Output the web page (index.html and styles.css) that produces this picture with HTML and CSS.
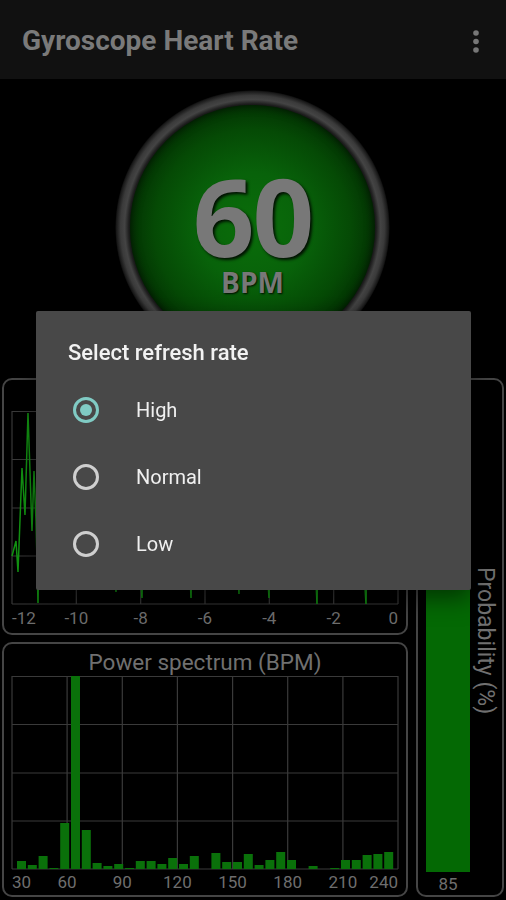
FILE: index.html
```html
<!DOCTYPE html>
<html lang="en">
<head>
<meta charset="utf-8">
<title>Gyroscope Heart Rate</title>
<link rel="stylesheet" href="styles.css">
</head>
<body>
<header class="toolbar">
  <h1 class="toolbar-title">Gyroscope Heart Rate</h1>
  <span class="menu-btn" aria-label="More options">
    <svg width="24" height="24" viewBox="0 0 24 24"><circle cx="12" cy="4" r="2.8" fill="#777"/><circle cx="12" cy="12.5" r="2.8" fill="#777"/><circle cx="12" cy="21" r="2.8" fill="#777"/></svg>
  </span>
</header>

<section class="gauge">
  <div class="dial">
    <div class="face">
      <span class="bpm-value">60</span>
      <span class="bpm-unit">BPM</span>
    </div>
  </div>
</section>

<main class="charts">
  <div class="card gyro">
    <svg class="plot" width="402" height="220" viewBox="0 0 402 220">
      <g stroke="#3a3a3a" stroke-width="1.2" fill="none">
        <line x1="8" y1="0.5" x2="394" y2="0.5"/>
        <line x1="8" y1="48.5" x2="394" y2="48.5"/>
        <line x1="8" y1="97" x2="394" y2="97"/>
        <line x1="8" y1="145" x2="394" y2="145"/>
        <line x1="8" y1="193" x2="394" y2="193"/>
        <line x1="8" y1="0" x2="8" y2="193"/>
        <line x1="72.3" y1="0" x2="72.3" y2="193"/>
        <line x1="136.7" y1="0" x2="136.7" y2="193"/>
        <line x1="201" y1="0" x2="201" y2="193"/>
        <line x1="265.3" y1="0" x2="265.3" y2="193"/>
        <line x1="329.7" y1="0" x2="329.7" y2="193"/>
        <line x1="394" y1="0" x2="394" y2="193"/>
      </g>
      <polyline fill="none" stroke="#129412" stroke-width="1.5" points="8,145 12,130 14,161 18,57 21,104 24,2 28,120 30,60 32,110 34,192 36,90 40,60 44,120 48,80 52,130 56,70 60,110 64,95 68,140 72,85 76,120 80,100 84,150 88,70 92,115 96,105 100,140 104,90 108,125 112,181 114,110 118,80 122,130 126,95 130,115 134,140 138,187 140,100 144,75 148,120 152,105 156,135 160,85 164,110 168,130 172,95 176,145 180,90 184,120 187,187 189,115 193,80 197,125 201,100 205,140 209,90 213,115 217,130 221,85 225,120 229,105 233,150 235,183 237,95 241,75 245,120 249,110 253,135 257,90 261,125 265,187 267,100 271,80 275,130 279,95 283,115 287,140 291,85 295,120 299,105 303,135 307,90 311,150 313,193 315,95 319,80 323,125 327,100 331,140 335,85 339,115 343,130 347,95 351,120 355,105 359,145 362,193 364,100 368,75 372,120 376,110 380,135 384,90 388,120 392,105 394,110"/>
      <g class="axis-label">
        <text x="8" y="213" text-anchor="start">-12</text>
        <text x="72.3" y="213" text-anchor="middle">-10</text>
        <text x="136.7" y="213" text-anchor="middle">-8</text>
        <text x="201" y="213" text-anchor="middle">-6</text>
        <text x="265.3" y="213" text-anchor="middle">-4</text>
        <text x="329.7" y="213" text-anchor="middle">-2</text>
        <text x="394" y="213" text-anchor="end">0</text>
      </g>
    </svg>
  </div>

  <div class="card power">
    <div class="card-title">Power spectrum (BPM)</div>
    <svg class="plot" width="402" height="217" viewBox="0 0 402 217">
      <g stroke="#3a3a3a" stroke-width="1.2" fill="none">
        <line x1="8" y1="0.5" x2="394" y2="0.5"/>
        <line x1="8" y1="48.5" x2="394" y2="48.5"/>
        <line x1="8" y1="97" x2="394" y2="97"/>
        <line x1="8" y1="145" x2="394" y2="145"/>
        <line x1="8" y1="193" x2="394" y2="193"/>
        <line x1="8" y1="0" x2="8" y2="193"/>
        <line x1="63.1" y1="0" x2="63.1" y2="193"/>
        <line x1="118.3" y1="0" x2="118.3" y2="193"/>
        <line x1="173.4" y1="0" x2="173.4" y2="193"/>
        <line x1="228.6" y1="0" x2="228.6" y2="193"/>
        <line x1="283.7" y1="0" x2="283.7" y2="193"/>
        <line x1="338.9" y1="0" x2="338.9" y2="193"/>
        <line x1="394" y1="0" x2="394" y2="193"/>
      </g>
      <g fill="#0a710a">
        <rect x="13" y="185" width="9" height="8"/>
        <rect x="23.8" y="189" width="9" height="4"/>
        <rect x="34.6" y="180" width="9" height="13"/>
        <rect x="45.4" y="192" width="9" height="1"/>
        <rect x="56.2" y="147" width="9" height="46"/>
        <rect x="67" y="0" width="9" height="193"/>
        <rect x="77.8" y="154" width="9" height="39"/>
        <rect x="88.6" y="187" width="9" height="6"/>
        <rect x="99.4" y="190" width="9" height="3"/>
        <rect x="110.2" y="188" width="9" height="5"/>
        <rect x="121" y="192" width="9" height="1"/>
        <rect x="131.8" y="185" width="9" height="8"/>
        <rect x="142.6" y="185" width="9" height="8"/>
        <rect x="153.4" y="188" width="9" height="5"/>
        <rect x="164.2" y="182" width="9" height="11"/>
        <rect x="175" y="188" width="9" height="5"/>
        <rect x="185.8" y="180" width="9" height="13"/>
        <rect x="207.4" y="177" width="9" height="16"/>
        <rect x="218.2" y="186" width="9" height="7"/>
        <rect x="229" y="186" width="9" height="7"/>
        <rect x="239.8" y="178" width="9" height="15"/>
        <rect x="250.6" y="189" width="9" height="4"/>
        <rect x="261.4" y="184" width="9" height="9"/>
        <rect x="272.2" y="176" width="9" height="17"/>
        <rect x="283" y="184" width="9" height="9"/>
        <rect x="304.6" y="190" width="9" height="3"/>
        <rect x="326.2" y="192" width="9" height="1"/>
        <rect x="337" y="184" width="9" height="9"/>
        <rect x="347.8" y="184" width="9" height="9"/>
        <rect x="358.6" y="179" width="9" height="14"/>
        <rect x="369.4" y="178" width="9" height="15"/>
        <rect x="380.2" y="176" width="9" height="17"/>
      </g>
      <g class="axis-label">
        <text x="8" y="212" text-anchor="start">30</text>
        <text x="63.1" y="212" text-anchor="middle">60</text>
        <text x="118.3" y="212" text-anchor="middle">90</text>
        <text x="173.4" y="212" text-anchor="middle">120</text>
        <text x="228.6" y="212" text-anchor="middle">150</text>
        <text x="283.7" y="212" text-anchor="middle">180</text>
        <text x="338.9" y="212" text-anchor="middle">210</text>
        <text x="394" y="212" text-anchor="end">240</text>
      </g>
    </svg>
  </div>

  <div class="card prob">
    <div class="prob-col">
      <div class="prob-track">
        <div class="prob-bar" style="height: 85%"></div>
      </div>
      <div class="prob-value">85</div>
    </div>
    <div class="prob-label">Probability (%)</div>
  </div>
</main>

<div class="scrim">
  <div class="dialog" role="dialog">
    <div class="dialog-title">Select refresh rate</div>
    <ul class="options">
      <li class="option"><span class="radio checked"></span><span class="option-label">High</span></li>
      <li class="option"><span class="radio"></span><span class="option-label">Normal</span></li>
      <li class="option"><span class="radio"></span><span class="option-label">Low</span></li>
    </ul>
  </div>
</div>
</body>
</html>
```
FILE: styles.css
```css
* { box-sizing: border-box; }

html, body {
  margin: 0;
  padding: 0;
}

body {
  width: 506px;
  height: 900px;
  overflow: hidden;
  background: #000;
  font-family: Roboto, "Noto Sans", "Liberation Sans", sans-serif;
  color: #777;
}

/* Toolbar */
.toolbar {
  height: 79px;
  background: #111;
  display: flex;
  align-items: center;
  justify-content: space-between;
  padding: 0 18px 0 22px;
}

.toolbar-title {
  margin: 0;
  font-size: 28px;
  font-weight: 700;
  line-height: 79px;
  color: #7a7a7a;
  padding-top: 2px;
}

.menu-btn {
  display: flex;
  width: 24px;
  height: 24px;
  margin-top: 3px;
}

/* Gauge */
.gauge {
  height: 299px;
  display: flex;
  justify-content: center;
  padding-top: 11px;
}

.dial {
  width: 275px;
  height: 275px;
  border-radius: 50%;
  padding: 15px;
  background: radial-gradient(circle closest-side, #111 0 88.5%, #1e1e1e 90%, #444 93%, #3a3a3a 96%, #181818 99%, #000 100%);
  box-shadow: 0 0 4px rgba(0,0,0,0.8);
  margin-left: -1px;
}

.face {
  width: 245px;
  height: 245px;
  border-radius: 50%;
  background: radial-gradient(circle closest-side, #0a6e0a 0%, #08620a 45%, #054a05 80%, #033303 100%);
  box-shadow: inset 0 0 10px rgba(0,0,0,0.7);
  display: flex;
  flex-direction: column;
  align-items: center;
  padding-top: 61px;
}

.bpm-value {
  font-family: "Open Sans", "Noto Sans", sans-serif;
  font-weight: 700;
  font-size: 108px;
  line-height: 100px;
  color: #787878;
  text-shadow: 2px 2px 3px rgba(0,0,0,0.85);
  letter-spacing: -2px;
}

.bpm-unit {
  font-family: "Open Sans", "Noto Sans", sans-serif;
  font-weight: 700;
  font-size: 28px;
  line-height: 28px;
  margin-top: 2px;
  color: #787878;
  text-shadow: 1px 1px 2px rgba(0,0,0,0.85);
}

/* Charts */
.charts {
  display: grid;
  grid-template-columns: 406px 88px;
  grid-template-rows: 257px 255px;
  column-gap: 8px;
  row-gap: 7px;
  padding: 0 2px;
}

.card {
  border: 2px solid #454545;
  border-radius: 10px;
  background: #000;
}

.plot {
  display: block;
}

.axis-label text {
  font-family: Roboto, "Noto Sans", sans-serif;
  font-size: 17px;
  fill: #6e6e6e;
}

.gyro {
  padding-top: 31px;
}

.power {
  display: flex;
  flex-direction: column;
}

.card-title {
  height: 32px;
  padding-top: 3px;
  text-align: center;
  font-size: 22.5px;
  line-height: 30px;
  color: #707070;
}

.prob {
  grid-column: 2;
  grid-row: 1 / span 2;
  display: flex;
}

.prob-col {
  width: 52px;
  padding-left: 8px;
  display: flex;
  flex-direction: column;
}

.prob-track {
  flex: 1;
  display: flex;
  align-items: flex-end;
  padding-top: 33px;
}

.prob-bar {
  width: 44px;
  background: #046904;
}

.prob-value {
  height: 23px;
  text-align: center;
  font-size: 17px;
  line-height: 23px;
  padding-top: 1px;
  color: #6e6e6e;
}

.prob-label {
  flex: 1;
  display: flex;
  align-items: center;
  justify-content: center;
  writing-mode: vertical-rl;
  font-size: 23px;
  color: #707070;
  padding-right: 1px;
  padding-top: 7px;
}

/* Dialog */
.scrim {
  position: fixed;
  inset: 0;
  display: flex;
  align-items: center;
  justify-content: center;
}

.dialog {
  width: 435px;
  background: #484848;
  border-radius: 2px;
  padding: 28px 0 12px;
  box-shadow: 0 8px 24px rgba(0,0,0,0.5);
  margin-left: 1px;
}

.dialog-title {
  padding-left: 32px;
  font-size: 22px;
  font-weight: 500;
  line-height: 28px;
  color: #f2f2f2;
}

.options {
  list-style: none;
  margin: 10px 0 0;
  padding: 0;
}

.option {
  height: 67px;
  display: flex;
  align-items: center;
  padding-left: 37px;
}

.radio {
  width: 26px;
  height: 26px;
  border-radius: 50%;
  border: 3px solid #cfcfcf;
  display: flex;
  align-items: center;
  justify-content: center;
  flex: none;
}

.radio.checked {
  border-color: #80cbc4;
}

.radio.checked::after {
  content: "";
  width: 12px;
  height: 12px;
  border-radius: 50%;
  background: #80cbc4;
}

.option-label {
  margin-left: 37px;
  font-size: 20px;
  color: #f0f0f0;
}
```
